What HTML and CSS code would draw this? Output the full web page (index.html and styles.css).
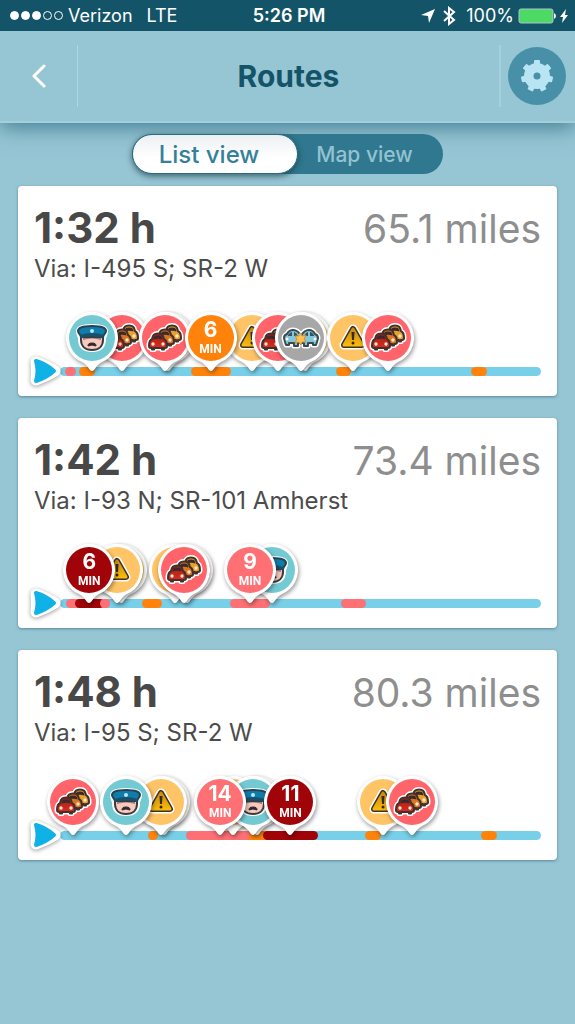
FILE: index.html
```
<!DOCTYPE html>
<html lang="en">
<head>
  <meta charset="UTF-8" />
  <meta name="viewport" content="width=device-width, initial-scale=1.0" />
  <title>Routes</title>
  <link rel="stylesheet" href="styles.css">
</head>
<body>
  <svg class="sprite" aria-hidden="true">
    <defs>
      <linearGradient id="redPaint" x1="0" y1="0" x2="0" y2="1">
        <stop offset="0" stop-color="#a81c14" /><stop offset="1" stop-color="#e02f22" />
      </linearGradient>
      <linearGradient id="signPaint" x1="0" y1="0" x2="0" y2="1">
        <stop offset="0" stop-color="#c98a12" /><stop offset="1" stop-color="#f9b90c" />
      </linearGradient>
      <path id="carShape" d="M-9 4C-9 0-8-2-6-3C-5-7-4-8.500 0-8.500S5-7 6-3C8-2 9 0 9 4Q9 6 7 6H6V7.500H4V6H-4V7.500H-6V6H-7Q-9 6-9 4Z" />
      <g id="carDetails">
        <path d="M-4.500-2.500C-4-6-3-6.500 0-6.500S4-6 4.500-2.500Q0-4 -4.500-2.500Z" fill="#3b2a2c" />
        <circle cx="-5" cy="2" r="1.700" fill="#ffe9d2" />
        <circle cx="5" cy="2" r="1.700" fill="#ffe9d2" />
      </g>
    </defs>

    <symbol id="jam" viewBox="0 0 52 52">
      <g fill="#fff" stroke="#fff" stroke-width="5" stroke-linejoin="round">
        <use href="#carShape" x="33" y="22" />
        <use href="#carShape" x="26" y="26" />
        <use href="#carShape" x="19" y="30" />
      </g>
      <g stroke="#40302e" stroke-width="2" stroke-linejoin="round">
        <use href="#carShape" x="33" y="22" fill="#eaa128" />
        <use href="#carDetails" x="33" y="22" stroke="none" />
        <use href="#carShape" x="26" y="26" fill="#dd741e" />
        <use href="#carDetails" x="26" y="26" stroke="none" />
        <use href="#carShape" x="19" y="30" fill="url(#redPaint)" />
        <use href="#carDetails" x="19" y="30" stroke="none" />
      </g>
    </symbol>

    <symbol id="police" viewBox="0 0 52 52">
      <path d="M12 19C12 15 19 14 26 14S40 15 40 19C40 23 38 24 38 27C38 34 34 38 26 38S14 34 14 27C14 24 12 23 12 19Z" fill="#fff" stroke="#fff" stroke-width="4" />
      <path d="M15 25V28C15 34 19 38 26 38S37 34 37 28V25Z" fill="#f6cabd" stroke="#3b3a40" stroke-width="2" />
      <path d="M17 26H35V28Q26 25 17 28Z" fill="#a57a74" />
      <path d="M22 34C22 32 23 31 26 31S30 32 30 34Q26 32 22 34Z" fill="#32262b" stroke="#32262b" />
      <path d="M12 19C12 15 19 14 26 14S40 15 40 19C40 21 38 22 37 25Q26 22 15 25C14 22 12 21 12 19Z" fill="#0f7cab" stroke="#26414f" stroke-width="2" stroke-linejoin="round" />
      <path d="M14 23Q26 19 38 23L37 26Q26 23 15 26Z" fill="#17516e" />
      <circle cx="26" cy="19" r="2" fill="#b5e8f4" />
    </symbol>

    <symbol id="hazard" viewBox="0 0 52 52">
      <path d="M26 17L35 33H17Z" fill="#fff" stroke="#fff" stroke-width="9" stroke-linejoin="round" />
      <path d="M26 17L35 33H17Z" fill="#413321" stroke="#413321" stroke-width="6" stroke-linejoin="round" />
      <path d="M26 17L35 33H17Z" fill="url(#signPaint)" stroke="url(#signPaint)" stroke-width="3" stroke-linejoin="round" />
      <path d="M24.500 20H27.500L27 28H25Z" fill="#332b22" />
      <circle cx="26" cy="31" r="1.500" fill="#332b22" />
    </symbol>

    <symbol id="crash" viewBox="0 0 52 52">
      <g id="wreck">
        <path d="M10 30L9 26Q9 23 12 22Q14 18 18 18Q23 18 26 24L25 31L23 31V34H19V31H14V33H11Z" fill="#fff" stroke="#fff" stroke-width="5" stroke-linejoin="round" />
        <path d="M10 30L9 26Q9 23 12 22Q14 18 18 18Q23 18 26 24L25 31L23 31V34H19V31H14V33H11Z" fill="#84c6da" stroke="#3b4a51" stroke-width="2" stroke-linejoin="round" />
        <path d="M13 23Q15 20 17 20V24H13ZM19 20Q22 21 23 24H19Z" fill="#365361" />
        <circle cx="12" cy="27" r="1.500" fill="#fff" />
      </g>
      <use href="#wreck" transform="translate(52 0) scale(-1 1)" />
      <path d="M26 21L27 24L31 23L29 27L31 30L27 30L26 33L24 30L20 31L22 27L20 24L24 24Z" fill="#ffc252" stroke="#ce8f35" />
    </symbol>
  </svg>

  <div class="status-bar">
    <div class="status-side">
      <span class="signal">
        <i class="dot full"></i><i class="dot full"></i><i class="dot full"></i><i class="dot"></i><i class="dot"></i>
      </span>
      <span>Verizon</span>
      <span class="network">LTE</span>
    </div>
    <div class="status-time">5:26 PM</div>
    <div class="status-side right">
      <svg width="14" height="14" viewBox="0 0 14 14"><path d="M14 0L8 14L7 7L0 6Z" fill="#fff" /></svg>
      <svg class="bluetooth" width="14" height="20" viewBox="0 0 14 20"><path d="M2 5L12 14L7 18V2L12 6L2 15" fill="none" stroke="#fff" stroke-width="2" /></svg>
      <span>100%</span>
      <svg class="battery" width="38" height="16" viewBox="0 0 38 16">
        <rect x="1" y="1" width="34" height="14" rx="2" fill="#4cd964" stroke="#a9c4cf" />
        <path d="M36 5Q38 6 38 8T36 11Z" fill="#fff" />
      </svg>
      <svg width="8" height="14" viewBox="0 0 8 14"><path d="M6 0L0 8H3L2 14L8 6H5Z" fill="#fff" /></svg>
    </div>
  </div>

  <header class="header">
    <button class="back" aria-label="Back">
      <svg width="16" height="24" viewBox="0 0 16 24"><path d="M13 2L3 12L13 22" fill="none" stroke="#fff" stroke-width="3" stroke-linecap="round" stroke-linejoin="round" /></svg>
    </button>
    <h1>Routes</h1>
    <div class="header-right">
      <button class="settings" aria-label="Settings">
        <svg width="34" height="34" viewBox="-17 -17 34 34">
          <g fill="#b9e4f3">
            <circle r="13" />
            <g id="tooth"><rect x="-3" y="-16" width="6" height="7" rx="1" /></g>
            <use href="#tooth" transform="rotate(51.430)" />
            <use href="#tooth" transform="rotate(102.860)" />
            <use href="#tooth" transform="rotate(154.290)" />
            <use href="#tooth" transform="rotate(205.710)" />
            <use href="#tooth" transform="rotate(257.140)" />
            <use href="#tooth" transform="rotate(308.570)" />
          </g>
          <circle r="3.500" fill="#4790a8" />
        </svg>
      </button>
    </div>
  </header>

  <main>
    <div class="view-switch">
      <button class="active">List view</button>
      <button>Map view</button>
    </div>
    <div class="routes" id="routes"></div>
  </main>

  <script>
    // positions and lengths are percent of the route
    const routes = [
      {
        time: "1:32 h", miles: "65.1 miles", via: "Via: I-495 S; SR-2 W",
        traffic: [["slow", 1, 2.3], ["medium", 4, 3.3], ["medium", 27.2, 8.4], ["medium", 57.3, 3.3], ["medium", 85.5, 3.3]],
        pins: [["jam", 12.9], ["police", 6.7], ["jam", 22.5], ["jam", 21.8], ["hazard", 40], ["medium", 31.3, 6],
               ["jam", 45.3], ["hazard", 50.9], ["crash", 50.1], ["hazard", 61], ["jam", 68.1]]
      },
      {
        time: "1:42 h", miles: "73.4 miles", via: "Via: I-93 N; SR-101 Amherst",
        traffic: [["slow", 1.2, 9.2], ["heavy", 3.1, 6], ["slow", 8.3, 2.1], ["medium", 17.1, 4.2], ["slow", 35.3, 8.4], ["slow", 58.4, 5.2]],
        pins: [["hazard", 12.6], ["hazard", 11.9], ["heavy", 6.1, 6], ["hazard", 23.9], ["jam", 26.5], ["jam", 25.8],
               ["police", 44], ["slow", 39.5, 9]]
      },
      {
        time: "1:48 h", miles: "80.3 miles", via: "Via: I-95 S; SR-2 W",
        traffic: [["medium", 18.2, 2.2], ["medium", 38.3, 5.5], ["slow", 26.2, 13.3], ["heavy", 42.3, 11.4], ["medium", 63.4, 3.3], ["medium", 87.5, 3.3]],
        pins: [["hazard", 21.6], ["hazard", 20.9], ["jam", 2.6], ["police", 13.7], ["hazard", 36], ["police", 41], ["police", 40.1],
               ["slow", 33.3, 14], ["heavy", 47.9, 11], ["hazard", 67.1], ["jam", 73.1]]
      }
    ];

    function pinHtml([type, at, minutes]) {
      const content = minutes
        ? `<span class="delay"><b>${minutes}</b><small>MIN</small></span>`
        : `<svg class="pin-icon" width="52" height="52"><use href="#${type}" /></svg>`;
      return `<div class="pin ${type}" style="left: ${at}%">
        <svg class="pin-shape" width="52" height="60" viewBox="0 0 52 60">
          <path d="M26 0A26 26 0 0 1 36 50Q32 52 28 58Q26 60 24 58Q20 52 16 50A26 26 0 0 1 26 0Z" fill="#fff" />
          <circle class="pin-fill" cx="26" cy="26" r="23" />
        </svg>${content}</div>`;
    }

    document.getElementById("routes").innerHTML = routes.map(route => `
      <article class="card">
        <div class="card-top">
          <h2>${route.time}</h2>
          <span class="miles">${route.miles}</span>
        </div>
        <p class="via">${route.via}</p>
        <div class="track">
          ${route.traffic.map(([level, from, length]) => `<span class="traffic ${level}" style="left: ${from}%; width: ${length}%"></span>`).join("")}
          ${route.pins.map(pinHtml).join("")}
          <svg class="arrow" width="34" height="34" viewBox="0 0 34 34">
            <path d="M8 8Q17 11 27 17Q17 23 8 26Q9 17 8 8Z" fill="#fff" stroke="#fff" stroke-width="11" stroke-linejoin="round" />
            <path d="M8 7Q18 10 26 17Q18 24 8 27Q11 17 8 7Z" fill="#0fb1e6" stroke="#0fb1e6" stroke-width="4" stroke-linejoin="round" />
          </svg>
        </div>
      </article>`).join("");
  </script>
</body>
</html>
```
FILE: styles.css
```
* {
  box-sizing: border-box;
  margin: 0;
  padding: 0;
}
body {
  min-height: 100vh;
  background-color: #96c5d4;
  font-family: Inter, "Liberation Sans", sans-serif;
}
button {
  border: none;
  background: none;
  font-family: inherit;
  cursor: pointer;
}
.sprite {
  position: absolute;
  width: 0;
  height: 0;
}
.status-bar {
  position: relative;
  z-index: 1;
  display: flex;
  align-items: center;
  height: 31px;
  padding: 0 7px 0 10px;
  background-color: #145468;
  color: #fff;
  font-size: 18px;
}
.status-side {
  flex: 1;
  display: flex;
  align-items: center;
}
.status-side.right {
  justify-content: flex-end;
}
.status-time {
  font-weight: 600;
}
.signal {
  display: flex;
  gap: 2px;
  margin-right: 5px;
}
.dot {
  width: 9px;
  height: 9px;
  border: 1px solid #fff;
  border-radius: 50%;
}
.dot.full {
  background-color: #fff;
}
.network {
  margin-left: 14px;
}
.bluetooth {
  margin: 0 10px 0 7px;
}
.battery {
  margin: 0 4px;
}
.header {
  position: relative;
  display: flex;
  align-items: center;
  justify-content: space-between;
  height: 92px;
  border-bottom: 2px solid #a4cedb;
  background-color: #96c5d4;
  box-shadow: 0 4px 20px #3f7c90;
}
.header h1 {
  color: #145468;
  font-size: 30px;
  font-weight: 700;
}
.back,
.header-right {
  display: flex;
  align-items: center;
  justify-content: center;
  width: 78px;
  height: 62px;
  border-right: 1px solid #b0d6e2;
}
.header-right {
  width: 76px;
  padding-right: 2px;
  border-right: none;
  border-left: 2px solid #a5d0dd;
}
.settings {
  display: flex;
  align-items: center;
  justify-content: center;
  width: 58px;
  height: 58px;
  border-radius: 50%;
  background-color: #4790a8;
}
.view-switch {
  position: relative;
  display: flex;
  width: 311px;
  height: 40px;
  margin: 11px auto 12px;
  border-radius: 20px;
  background-color: #2f788f;
}
.view-switch button {
  flex: 1;
  padding-right: 12px;
  color: #94c2d1;
  font-size: 21px;
  font-weight: 500;
}
.view-switch .active {
  flex: none;
  width: 166px;
  border: 1px solid #286c82;
  border-radius: 20px;
  background: linear-gradient(#eceff1, #fff 60%);
  box-shadow: 0 2px 6px rgba(20, 50, 60, 0.7);
  color: #348199;
  font-size: 24px;
}
.routes {
  display: flex;
  flex-direction: column;
  gap: 22px;
  padding: 0 18px 40px;
}
.card {
  height: 210px;
  padding: 15px 16px 0;
  border-radius: 4px;
  background-color: #fff;
  box-shadow: 0 1px 3px rgba(50, 100, 120, 0.6);
}
.card-top {
  display: flex;
  align-items: baseline;
  justify-content: space-between;
  line-height: 54px;
}
.card h2 {
  color: #484848;
  font-size: 42px;
  font-weight: 700;
}
.miles {
  color: #8e8e8e;
  font-size: 39px;
}
.via {
  color: #4c4c4c;
  font-size: 24px;
  line-height: 26px;
}
.track {
  position: relative;
  height: 9px;
  margin: 85px 0 0 26px;
  border-radius: 5px;
  background-color: #78cfe8;
}
.traffic {
  position: absolute;
  top: 0;
  height: 9px;
  border-radius: 5px;
}
.traffic.slow {
  background-color: #fe7074;
}
.traffic.medium {
  background-color: #ff830b;
}
.traffic.heavy {
  background-color: #a00408;
}
.pin {
  position: absolute;
  bottom: 4px;
  width: 52px;
  height: 60px;
  margin-left: -26px;
  filter: drop-shadow(1px 2px 2px rgba(0, 0, 0, 0.4));
}
.pin-shape,
.pin-icon {
  position: absolute;
  top: 0;
  left: 0;
}
.pin-fill {
  fill: #ff646b;
}
.slow .pin-fill {
  fill: #fe7074;
}
.medium .pin-fill {
  fill: #ff830b;
}
.heavy .pin-fill {
  fill: #a00408;
}
.police .pin-fill {
  fill: #74cad2;
}
.hazard .pin-fill {
  fill: #ffc466;
}
.crash .pin-fill {
  fill: #a7a7a7;
}
.delay {
  position: relative;
  display: flex;
  flex-direction: column;
  align-items: center;
  padding-top: 7px;
  color: #fff;
}
.delay b {
  font-size: 21px;
  line-height: 22px;
}
.delay small {
  font-family: Roboto, sans-serif;
  font-size: 12px;
  font-weight: 700;
  line-height: 16px;
}
.arrow {
  position: absolute;
  top: -13px;
  left: -32px;
  filter: drop-shadow(0 1px 2px rgba(0, 0, 0, 0.4));
}
```
